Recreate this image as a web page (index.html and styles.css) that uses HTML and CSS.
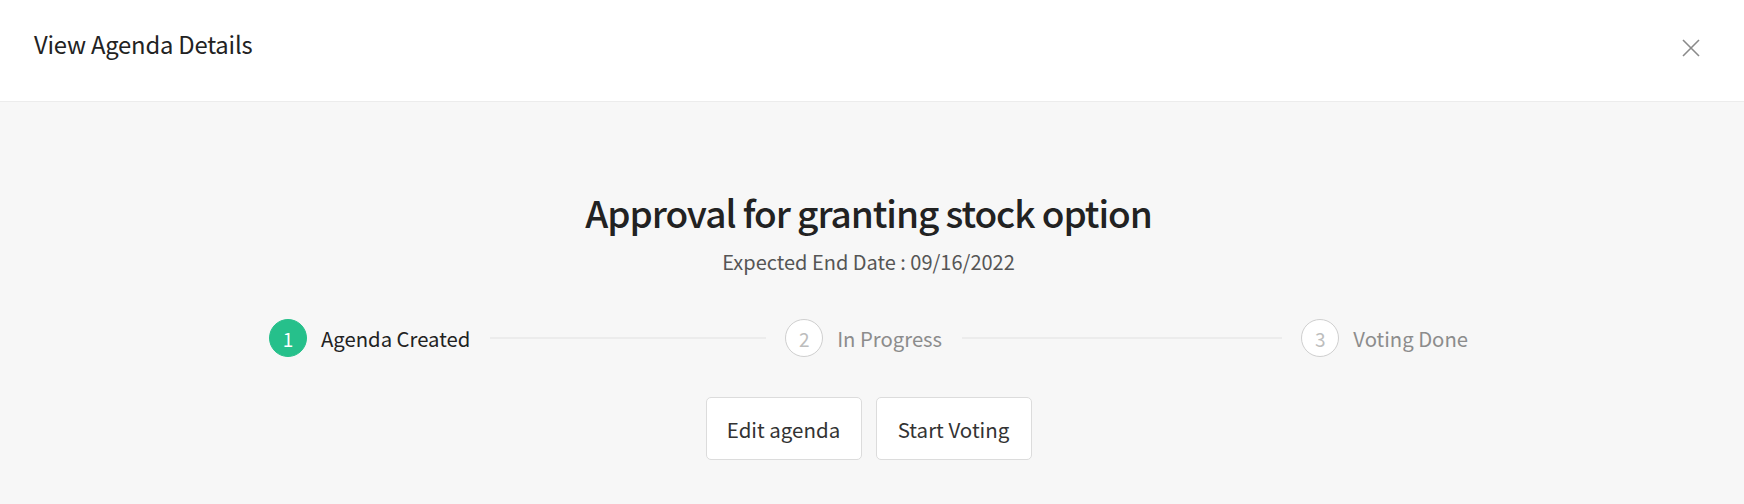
FILE: index.html
```html
<!DOCTYPE html>
<html>
<head>
<meta charset="utf-8">
<link rel="stylesheet" href="styles.css">
</head>
<body>
<div class="modal">
  <header class="modal-header">
    <h1 class="modal-title">View Agenda Details</h1>
    <button class="close-btn" aria-label="Close">
      <svg width="18" height="18" viewBox="0 0 18 18"><path d="M1 1L17 17M17 1L1 17" stroke="#8a8a8a" stroke-width="1.6" fill="none"/></svg>
    </button>
  </header>
  <main class="modal-body">
    <h2 class="agenda-title">Approval for granting stock option</h2>
    <p class="agenda-date">Expected End Date : 09/16/2022</p>
    <div class="steps">
      <div class="step step-active">
        <span class="step-icon">1</span>
        <span class="step-label">Agenda Created</span>
        <span class="step-line"></span>
      </div>
      <div class="step">
        <span class="step-icon">2</span>
        <span class="step-label">In Progress</span>
        <span class="step-line"></span>
      </div>
      <div class="step step-last">
        <span class="step-icon">3</span>
        <span class="step-label">Voting Done</span>
      </div>
    </div>
    <div class="actions">
      <button class="btn">Edit agenda</button>
      <button class="btn">Start Voting</button>
    </div>
  </main>
</div>
</body>
</html>
```

FILE: styles.css
```css
* { box-sizing: border-box; }
html, body { margin: 0; padding: 0; height: 100%; }
body {
  font-family: "Noto Sans CJK KR", "Noto Sans", sans-serif;
  background: #f7f7f7;
  color: #222;
}
.modal { min-height: 100%; display: flex; flex-direction: column; }
.modal-header {
  height: 102px;
  background: #fff;
  border-bottom: 1px solid #ececec;
  display: flex;
  align-items: center;
  justify-content: space-between;
  padding: 0 43px 14px 34px;
}
.modal-title {
  margin: 0;
  font-size: 23.8px;
  font-weight: 400;
  color: #222;
  letter-spacing: -0.2px;
}
.close-btn {
  border: 0;
  background: transparent;
  padding: 0;
  margin-top: 9px;
  width: 20px;
  height: 20px;
  display: flex;
  align-items: center;
  justify-content: center;
  cursor: pointer;
}
.modal-body {
  flex: 1;
  background: #f7f7f7;
  display: flex;
  flex-direction: column;
  align-items: center;
  padding: 87px 7px 0 0;
}
.agenda-title {
  margin: 0;
  font-size: 37px;
  line-height: 46px;
  font-weight: 500;
  color: #222;
  letter-spacing: -1.05px;
}
.agenda-date {
  margin: 14px 0 0;
  font-size: 20px;
  line-height: 26px;
  color: #555;
}
.steps {
  width: 1199px;
  display: flex;
  align-items: center;
  margin-top: 44px;
}
.step {
  flex: 1 1 0;
  display: flex;
  align-items: center;
  min-width: 0;
}
.step-last { flex: 0 0 auto; }
.step-icon {
  width: 38px;
  height: 38px;
  border-radius: 50%;
  border: 1px solid #cfcfcf;
  background: #fff;
  color: #bdbdbd;
  font-size: 19px;
  display: flex;
  align-items: center;
  justify-content: center;
  flex: none;
}
.step-active .step-icon {
  background: #26c08b;
  border-color: #26c08b;
  color: #fff;
}
.step-label {
  margin-left: 14px;
  font-size: 20.3px;
  color: #8c8c8c;
  white-space: nowrap;
}
.step-active .step-label { color: #222; }
.step-line {
  flex: 1;
  height: 2px;
  background: #ececec;
  margin: 0 19px 0 20px;
}
.actions {
  display: flex;
  gap: 14px;
  margin-top: 40px;
}
.btn {
  width: 156px;
  height: 63px;
  background: #fff;
  border: 1px solid #dcdcdc;
  border-radius: 5px;
  font-family: inherit;
  font-size: 20.5px;
  color: #333;
  padding: 0;
  cursor: pointer;
}
```
